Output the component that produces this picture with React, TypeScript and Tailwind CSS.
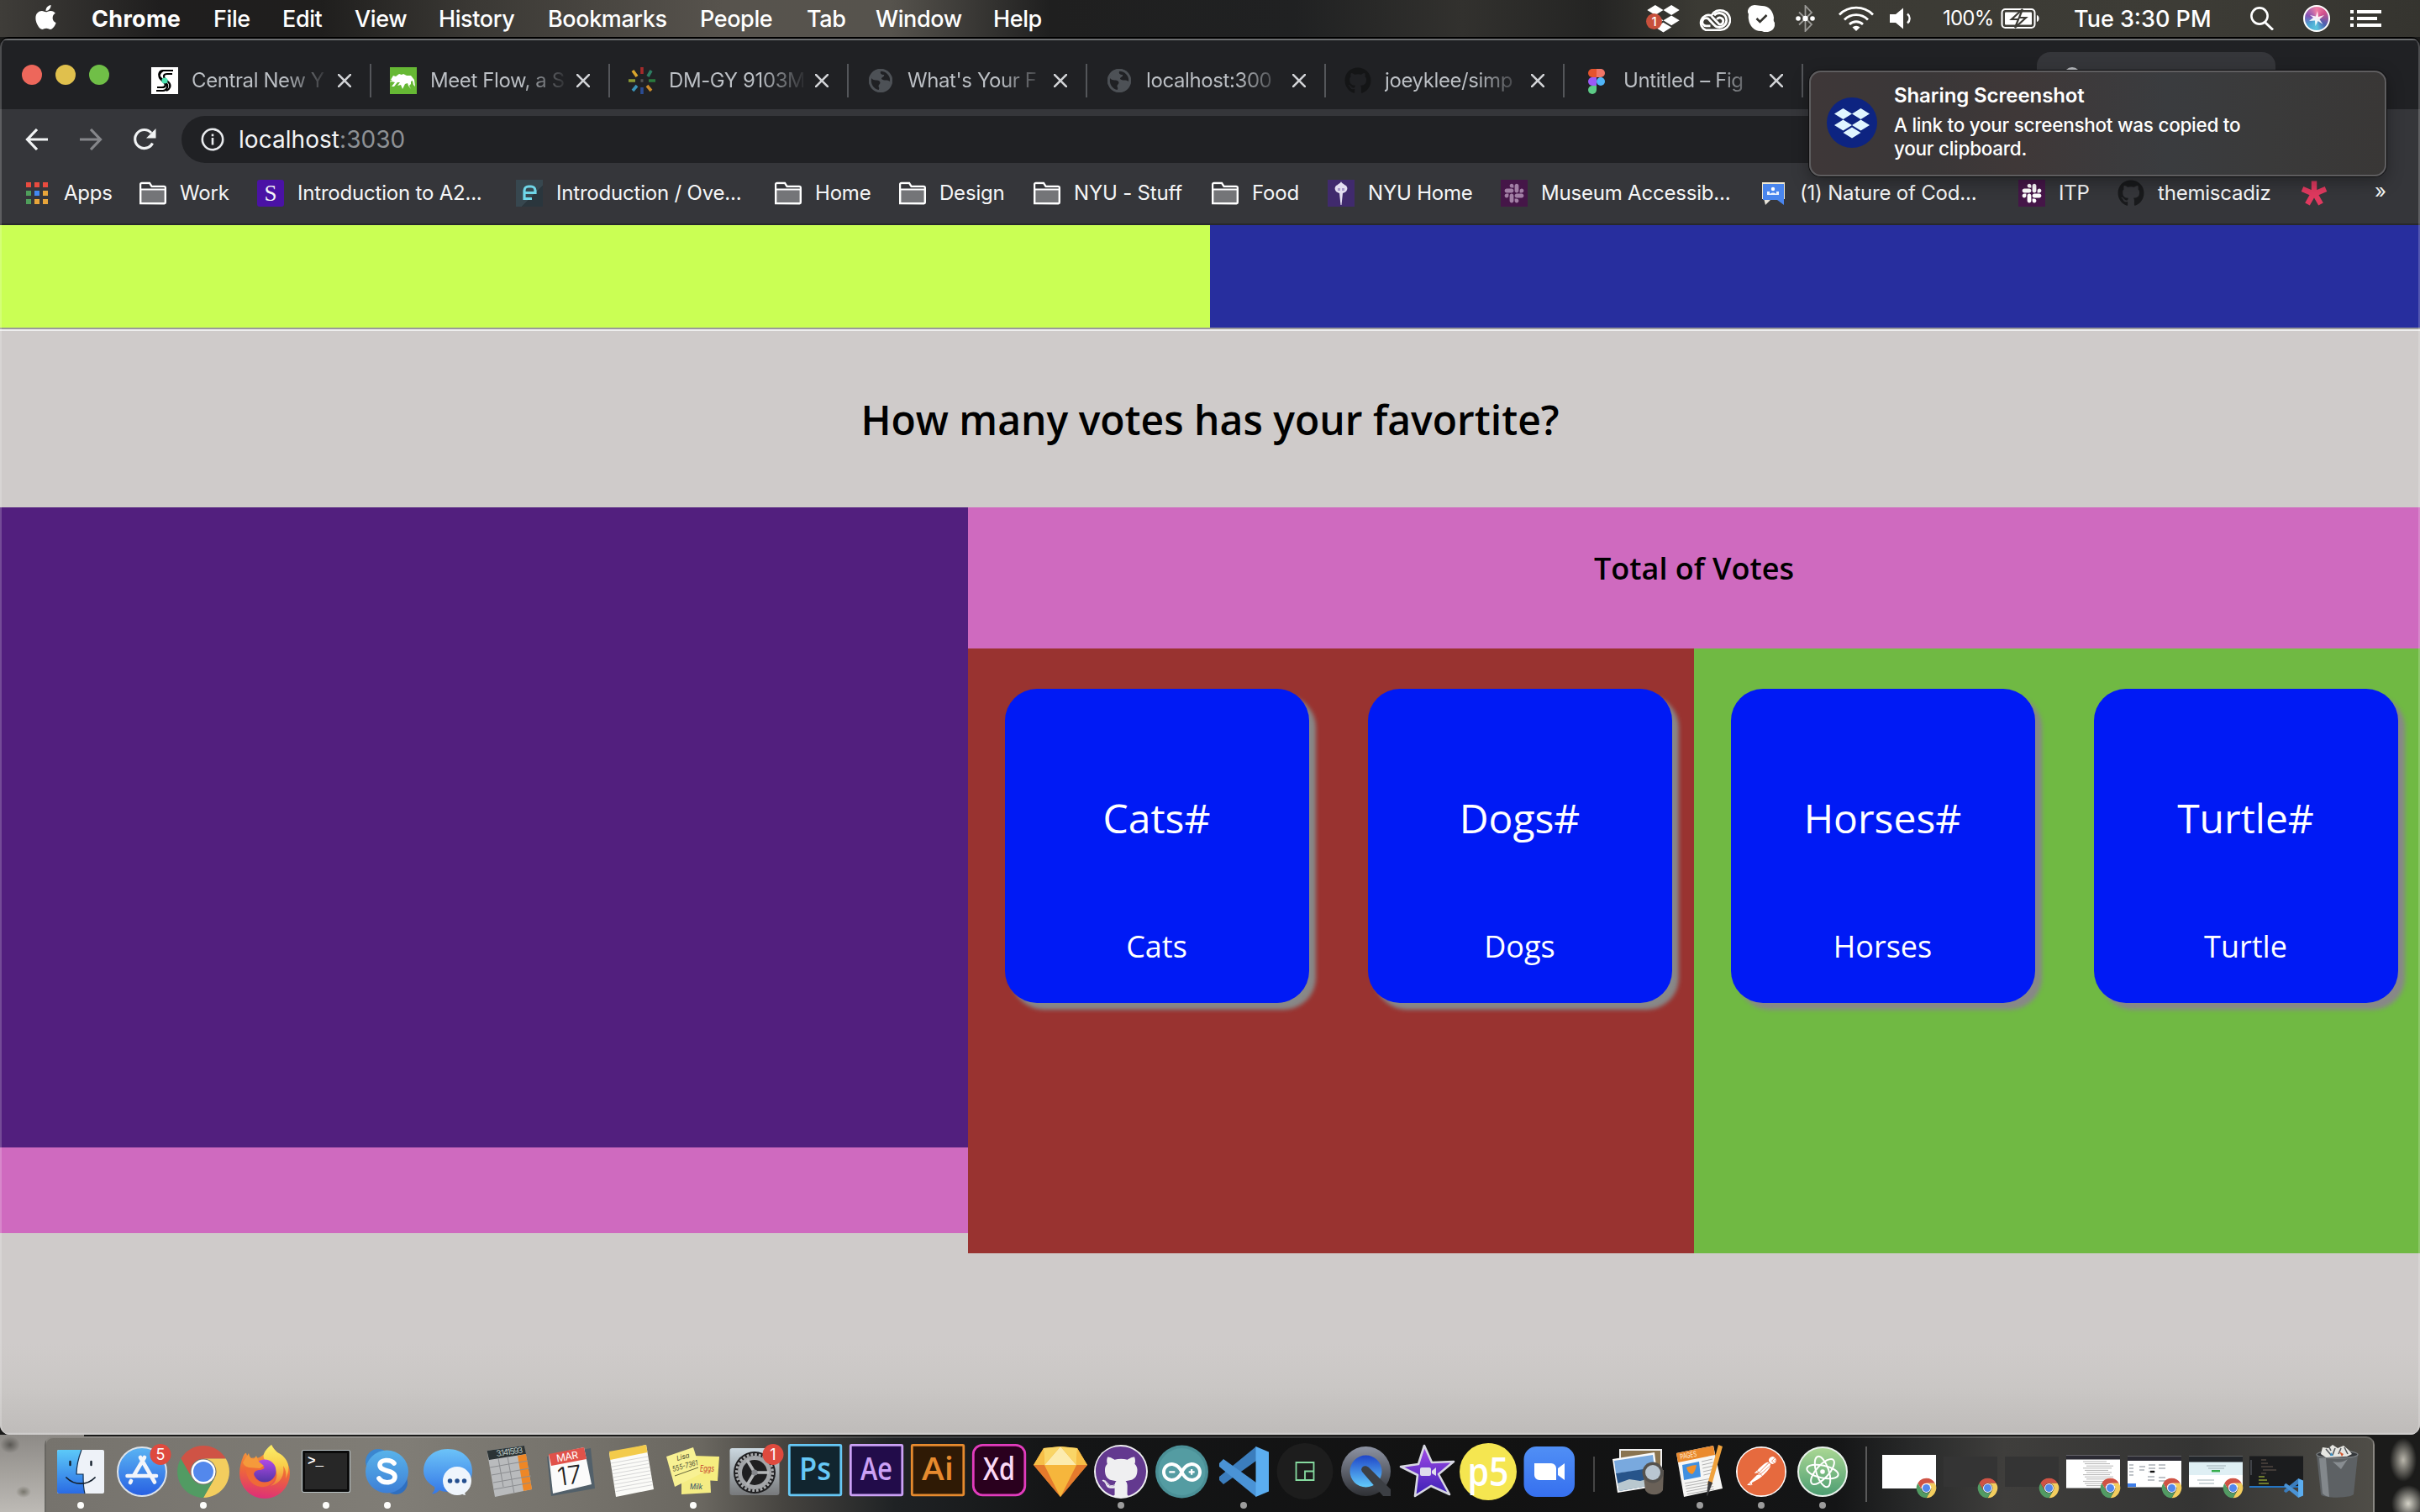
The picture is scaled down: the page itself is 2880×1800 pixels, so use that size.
import type { ReactNode } from 'react';
import { FaApple, FaGithub, FaSlack } from 'react-icons/fa';
import { SiPostman, SiArduino } from 'react-icons/si';

/* ---------- shared marks ---------- */

function DropboxMark({ className }: { className: string }) {
  return (
    <svg viewBox="0 0 42 36" className={className} fill="currentColor">
      <path d="M10.500 0 21 6.500 10.500 13 0 6.500zM31.500 0 42 6.500 31.500 13 21 6.500zM10.500 13.500 21 20l-10.500 6.500L0 20zM31.500 13.500 42 20l-10.500 6.500L21 20zM21 22.500l10.500 6.500L21 35.500 10.500 29z" />
    </svg>
  );
}

function ChromeMark({ className, x, y, size }: { className?: string; x?: number; y?: number; size?: number }) {
  return (
    <svg viewBox="0 0 64 64" className={className} x={x} y={y} width={size} height={size}>
      <path d="M6 17A30 30 0 0 1 58 17L32 17A15 15 0 0 0 19 39.5Z" fill="#cf5345" />
      <path d="M58 17A30 30 0 0 1 32 62L45 39.5A15 15 0 0 0 32 17Z" fill="#f3cd5e" />
      <path d="M32 62A30 30 0 0 1 6 17L19 39.5A15 15 0 0 0 45 39.5Z" fill="#529b63" />
      <circle cx="32" cy="32" r="14" fill="#fff" />
      <circle cx="32" cy="32" r="11.600" fill="#5388ec" />
    </svg>
  );
}

function CodeMark({ x, y, size }: { x: number; y: number; size: number }) {
  return (
    <svg viewBox="0 0 60 60" x={x} y={y} width={size} height={size}>
      <path d="M1 40 6 45 45 17V0L1 36z" fill="#3b7dbd" />
      <path d="M1 20 6 15 45 43V60L1 24z" fill="#4a93d6" />
      <path d="M44.500 0 60 6.500v47L44.500 60z" fill="#5badf0" />
    </svg>
  );
}

function Globe() {
  return (
    <svg viewBox="0 0 32 32" className="size-8">
      <circle cx="16" cy="16" r="14" fill="#4d5156" />
      <path d="M5 13c3 4 8 1 10 4s-3 4-1 7c1 2-1 4-2 4C6 26 3 20 5 13zM17 4c-3 3 0 5 3 5 1 3-3 2-3 5 3 3 7 0 10 3 2-6-2-13-10-13z" fill="#202124" />
      <circle cx="16" cy="16" r="12.600" fill="none" stroke="#4d5156" strokeWidth="2.800" />
    </svg>
  );
}

/* ---------- menu bar ---------- */

const menus: [string, string][] = [
  ['File', 'w-[82px]'],
  ['Edit', 'w-[86px]'],
  ['View', 'w-[100px]'],
  ['History', 'w-[130px]'],
  ['Bookmarks', 'w-[181px]'],
  ['People', 'w-[127px]'],
  ['Tab', 'w-[82px]'],
  ['Window', 'w-[140px]'],
  ['Help', 'w-[80px]'],
];

function MenuBar() {
  return (
    <header className="flex h-11 shrink-0 items-center whitespace-nowrap bg-[linear-gradient(90deg,#3f3d39_0px,#1f1e1e_190px,#1f1e1d_380px,#3a3834_560px,#57534d_860px,#56534d_1060px,#1f1f1f_1250px,#202122_1540px,#32312e_1740px,#242423_1900px,#3b3a34_2020px,#3d3c36_2600px,#35342f_2880px)] text-[27px] leading-11 text-white">
      <div className="flex w-[1960px] shrink-0 items-center pl-[38px]">
        <FaApple className="-mt-1 mr-[38px] h-[33px] w-[33px] shrink-0" />
        <span className="w-[145px] pt-px font-bold tracking-[0.3px]">Chrome</span>
        {menus.map(([label, w]) => (
          <span key={label} className={`${w} shrink-0 pt-px font-medium tracking-[-0.4px]`}>
            {label}
          </span>
        ))}
      </div>
      <div className="relative w-[60px] shrink-0">
        <DropboxMark className="h-[33px] w-[39px]" />
        <span className="absolute bottom-[4px] left-[-1px] size-[19px] rounded-full bg-[#c8503c] text-center text-[15px] font-medium leading-[19px]">1</span>
      </div>
      <div className="w-[60px] shrink-0 pt-1">
        <svg viewBox="0 0 40 28" className="h-7 w-10" fill="none" stroke="#fff">
          <path d="M10 25.800h17.500a11.800 11.800 0 1 0-10.800-17.300A8.800 8.800 0 1 0 10 25.800z" strokeWidth="2.600" />
          <path d="M15.500 20.800H10.500a4.600 4.600 0 1 1 3.400-7.600l5.600 6a8.500 8.500 0 1 0 .5-11" strokeWidth="2.800" />
          <path d="m17 9.500 9.300 9.600a4 4 0 1 0-3-6" strokeWidth="2.800" />
        </svg>
      </div>
      <div className="w-[57px] shrink-0">
        <svg viewBox="0 0 32 32" className="size-8">
          <path d="M8 0a8 8 0 0 0-8 9c2 2 0 4 1 8 1 8 7 14 14 14 3 0 5 2 9 1 6-1 9-6 8-11-2-3-1-4-1-6C30 7 25 1 17 1 13 1 12 0 8 0z" fill="#fff" />
          <path d="m10.500 16 4 4 8-8" fill="none" stroke="#33322e" strokeWidth="2.600" />
        </svg>
      </div>
      <div className="w-[50px] shrink-0">
        <svg viewBox="0 0 24 32" className="h-8 w-6" fill="none" stroke="#9b9a97" strokeWidth="1.800">
          <path d="M4 8.500 19 23l-7.500 8V1L19 9 4 23.500" />
          <circle cx="3" cy="16" r="2.800" fill="#fff" stroke="none" />
          <circle cx="11.500" cy="16" r="3.200" fill="#fff" stroke="none" />
          <circle cx="20" cy="16" r="2.800" fill="#fff" stroke="none" />
        </svg>
      </div>
      <div className="w-[61px] shrink-0">
        <svg viewBox="0 0 44 30" className="h-[30px] w-11" fill="none" stroke="#fff" strokeWidth="2.800">
          <path d="M2 10.500a28.300 28.300 0 0 1 40 0" />
          <path d="M8 16.500a19.500 19.500 0 0 1 28 0" />
          <path d="M14 22a11.500 11.500 0 0 1 16 0" />
          <path d="m22 30-4.500-4.500a6.500 6.500 0 0 1 9 0z" fill="#fff" stroke="none" />
        </svg>
      </div>
      <div className="w-[64px] shrink-0">
        <svg viewBox="0 0 30 26" className="h-[26px] w-[30px]">
          <path d="M1 8h7l9-7.500v25L8 18H1z" fill="#fff" />
          <path d="M22 7.500c3.500 3 3.500 8 0 11" fill="none" stroke="#fff" strokeWidth="2.400" />
        </svg>
      </div>
      <span className="w-[69px] shrink-0 text-[24px] tracking-[-0.8px]">100%</span>
      <div className="w-[87px] shrink-0">
        <svg viewBox="0 0 48 26" className="h-[26px] w-12">
          <rect x="1.500" y="2" width="39" height="22" rx="4" fill="none" stroke="#fff" strokeWidth="2" />
          <rect x="5" y="5.500" width="32" height="15" rx="1" fill="#fff" />
          <path d="M43 9c3.500 1 3.500 7 0 8z" fill="#fff" />
          <path d="M26 2 13 14h8l-4 10 13-12h-8l4-10z" fill="#fff" stroke="#3d3c36" strokeWidth="2.200" />
        </svg>
      </div>
      <span className="w-[209px] shrink-0 pt-px font-medium tracking-[0px]">Tue 3:30 PM</span>
      <div className="w-[64px] shrink-0">
        <svg viewBox="0 0 30 28" className="h-7 w-[30px]" fill="none" stroke="#fff" strokeWidth="2.600">
          <circle cx="12" cy="11" r="9.600" />
          <path d="m18.500 18.500 9.500 9" strokeWidth="3" />
        </svg>
      </div>
      <div className="flex w-[56px] shrink-0">
        <span className="grid size-8 place-items-center rounded-full border-2 border-white bg-[conic-gradient(from_0deg,#ef7fa5,#d24f8c_15%,#4a5fb0_35%,#5cc6dd_50%,#4ba3d2_65%,#8452b4_80%,#ef7fa5)]">
          <svg viewBox="0 0 24 24" className="size-6">
            <path d="m13 3 1 7 7-2-5.500 5 4 6-6-4-3 6-.5-6.500L3 15l5-4-4-3 7 1.500z" fill="#fff" opacity=".9" />
          </svg>
        </span>
      </div>
      <svg viewBox="0 0 38 20" className="h-5 w-[38px] shrink-0" fill="#fff">
        <path d="M0 0h4v4H0zM8 0h29v4H8zM0 8h4v4H0zM8 8h24v4H8zM0 16h4v4H0zM8 16h29v4H8z" />
      </svg>
    </header>
  );
}

/* ---------- tab strip ---------- */

const tabs: { title: string; icon: ReactNode }[] = [
  {
    title: 'Central New Y',
    icon: (
      <svg viewBox="0 0 32 32" className="size-8">
        <path d="M0 0h32v32H0z" fill="#fff" />
        <path d="M26 4H14c-5 0-6 6-3 8.500l7 7c3 3.500 0 8.500-4 8.500H6M25 8h-6c-5 0-5 4-2 6.500l4 4c3 3.500 1 8-3 9.500M7 24h6c4 0 5-3 2-6l-4-4c-3-3-1-8 3-10" fill="none" stroke="#000" strokeWidth="2.200" />
        <circle cx="16" cy="16" r="3.600" fill="#4be3b0" />
      </svg>
    ),
  },
  {
    title: 'Meet Flow, a S',
    icon: (
      <svg viewBox="0 0 32 32" className="size-8">
        <path d="M0 0h32v32H0z" fill="#66b834" />
        <path d="m1 15 3-5 3 1 4-3 3 1 2-1 4 2 5 0 4 5 1 8-2-2-1-5-2 1 0 3-2 2 2 4-3-4-1-3-3 1-3 6-2-5-4 1 3-4-3 0-4 5-3 0 4-5-4-1-3 1 4-3z" fill="#fff" />
      </svg>
    ),
  },
  {
    title: 'DM-GY 9103M',
    icon: (
      <svg viewBox="0 0 32 32" className="size-8" strokeWidth="3.600" fill="none">
        <path d="M16 0v8" stroke="#a52a2a" />
        <path d="m27 4-4 7" stroke="#2e7d63" />
        <path d="M24 16h8" stroke="#2a7a3d" />
        <path d="m22 22 5 6" stroke="#c98a2b" />
        <path d="M16 24v8" stroke="#2b4c93" />
        <path d="m10 22-5 6" stroke="#3a93b8" />
        <path d="M0 16h8" stroke="#8a9a34" />
        <path d="m5 4 5 7" stroke="#d9a52c" />
        <path d="M14.500 16h3" stroke="#555" />
      </svg>
    ),
  },
  { title: "What's Your F", icon: <Globe /> },
  { title: 'localhost:300', icon: <Globe /> },
  { title: 'joeyklee/simp', icon: <FaGithub className="size-8 text-[#141516]" /> },
  {
    title: 'Untitled – Fig',
    icon: (
      <svg viewBox="0 0 32 32" className="size-8">
        <path d="M11 2h5v10h-5a5 5 0 0 1 0-10z" fill="#e5532d" />
        <path d="M16 2h5a5 5 0 0 1 0 10h-5z" fill="#ef7567" />
        <path d="M11 12h5v10h-5a5 5 0 0 1 0-10z" fill="#9b59f6" />
        <circle cx="21" cy="17" r="5" fill="#4fb5f9" />
        <path d="M11 22h5v5a5 5 0 1 1-5-5z" fill="#5ccb86" />
      </svg>
    ),
  },
];

function TabStrip() {
  return (
    <div className="flex h-[82px] items-end bg-[#202124]">
      <div className="flex h-full w-[158px] shrink-0 items-center gap-4 pl-[26px]">
        <span className="size-6 rounded-full bg-[#ed675b]" />
        <span className="size-6 rounded-full bg-[#e0c04d]" />
        <span className="size-6 rounded-full bg-[#70bf47]" />
      </div>
      {tabs.map((t) => (
        <div key={t.title} className="flex h-[68px] w-[284px] shrink-0 items-center pl-[22px]">
          <div className="w-8 shrink-0">{t.icon}</div>
          <span className="ml-4 w-[160px] shrink-0 whitespace-nowrap bg-[linear-gradient(90deg,#bdc1c6_0px,#bdc1c6_110px,rgba(189,193,198,0.1)_160px)] bg-clip-text text-[24px] leading-[40px] tracking-[-0.4px] text-transparent">
            {t.title}
          </span>
          <svg viewBox="0 0 16 16" className="ml-[14px] size-4 shrink-0" stroke="#d0d2d5" strokeWidth="2.600">
            <path d="m0 0 16 16M16 0 0 16" />
          </svg>
          <span className="ml-auto h-10 w-0.5 bg-[#54565a]" />
        </div>
      ))}
      <div className="ml-[278px] h-[68px] w-[284px] rounded-t-[16px] bg-[#35363a] pl-[32px] pt-[18px]">
        <span className="block size-5 rounded-full bg-[#b9bcc0]" />
      </div>
    </div>
  );
}

/* ---------- toolbar ---------- */

function Toolbar() {
  return (
    <div className="flex h-[72px] items-center bg-[#35363a] pl-[30px]">
      <svg viewBox="0 0 28 26" className="h-[26px] w-7 shrink-0" fill="none" stroke="#f1f3f4" strokeWidth="3.200">
        <path d="M27 13H3M14 1 2.500 13 14 25" />
      </svg>
      <svg viewBox="0 0 28 26" className="ml-9 h-[26px] w-7 shrink-0" fill="none" stroke="#85868a" strokeWidth="3.200">
        <path d="M1 13h24M14 1l11.500 12L14 25" />
      </svg>
      <svg viewBox="0 0 28 28" className="ml-9 size-7 shrink-0">
        <path d="M23.500 18.500A11 11 0 1 1 22 6.300" fill="none" stroke="#f1f3f4" strokeWidth="3.200" />
        <path d="M27.500 1v11.500H16z" fill="#f1f3f4" />
      </svg>
      <div className="ml-[30px] flex h-14 w-[2300px] items-center rounded-full bg-[#202124] pl-[23px] text-[28px] text-[#f3f4f5]">
        <svg viewBox="0 0 28 28" className="size-7 shrink-0">
          <circle cx="14" cy="14" r="12.200" fill="none" stroke="#e8eaed" strokeWidth="2.600" />
          <path d="M12.700 12h2.600v8.500h-2.600zM12.700 7.500h2.600v2.700h-2.600z" fill="#e8eaed" />
        </svg>
        <span className="ml-[17px] tracking-[0.050px]">
          localhost<span className="text-[#8e9195]">:3030</span>
        </span>
      </div>
    </div>
  );
}

/* ---------- bookmarks ---------- */

function Folder() {
  return (
    <svg viewBox="0 0 32 32" className="size-8">
      <path d="M1.200 28V5.500A1.500 1.500 0 0 1 2.700 4H12l2.500 4H29a1.800 1.800 0 0 1 1.800 1.800V27a1.200 1.200 0 0 1-1.200 1.200z" fill="#747578" stroke="#fff" strokeWidth="2.400" />
      <path d="M2.400 5.200h9l2.500 4h15.700v2H2.400z" fill="#35363a" />
      <path d="M1 11.500h30" stroke="#fff" strokeWidth="2" />
    </svg>
  );
}

function Tile({ className, children }: { className: string; children: ReactNode }) {
  return <span className={`grid size-8 place-items-center ${className}`}>{children}</span>;
}

const bookmarks: { label: string; w: string; icon: ReactNode }[] = [
  {
    label: 'Apps',
    w: 'w-[138px]',
    icon: (
      <svg viewBox="0 0 32 32" className="size-8">
        <path d="M3 3h6v6H3zM13 3h6v6h-6zM23 3h6v6h-6z" fill="#e84b3f" />
        <path d="M3 13h6v6H3zM3 23h6v6H3z" fill="#4f9e5b" />
        <path d="M13 13h6v6h-6z" fill="#4389f0" />
        <path d="M23 13h6v6h-6zM13 23h6v6h-6zM23 23h6v6h-6z" fill="#e8a53a" />
      </svg>
    ),
  },
  { label: 'Work', w: 'w-[140px]', icon: <Folder /> },
  {
    label: 'Introduction to A2...',
    w: 'w-[308px]',
    icon: <Tile className="rounded-[3px] bg-[#4a12a5] font-['Liberation_Serif'] text-[27px] leading-8">S</Tile>,
  },
  {
    label: 'Introduction / Ove...',
    w: 'w-[308px]',
    icon: (
      <Tile className="bg-[linear-gradient(135deg,#37474f_60%,#2a363d_60%)] text-[#6fd6e8]">
        <svg viewBox="0 0 32 32" className="size-8" fill="none" stroke="currentColor" strokeWidth="3.200">
          <path d="M10 15.500h13V13a5 5 0 0 0-5-5h-3a5 5 0 0 0-5 5v9.500h9" />
        </svg>
      </Tile>
    ),
  },
  { label: 'Home', w: 'w-[148px]', icon: <Folder /> },
  { label: 'Design', w: 'w-[160px]', icon: <Folder /> },
  { label: 'NYU - Stuff', w: 'w-[212px]', icon: <Folder /> },
  { label: 'Food', w: 'w-[138px]', icon: <Folder /> },
  {
    label: 'NYU Home',
    w: 'w-[206px]',
    icon: (
      <Tile className="bg-[#402a6d]">
        <svg viewBox="0 0 32 32" className="size-8">
          <path d="M16 2c1 3 3 2 4 4 3 1 4 4 3 6-1 3-3 3-5 4l-1.500 14h-1L14 16c-2-1-4-1-5-4-1-2 0-5 3-6 1-2 3-1 4-4z" fill="#e3def0" />
          <path d="M12 10h3v3h-3zM17 10h3v3h-3z" fill="#a89bc9" />
        </svg>
      </Tile>
    ),
  },
  {
    label: 'Museum Accessib...',
    w: 'w-[308px]',
    icon: <Tile className="bg-[#451648] text-[#a27fa5]"><FaSlack className="size-[26px]" /></Tile>,
  },
  {
    label: '(1) Nature of Cod...',
    w: 'w-[308px]',
    icon: (
      <svg viewBox="0 0 32 32" className="size-8">
        <path d="M3 3h27v20H3z" fill="#f1e9d2" />
        <path d="M5 22h10L7 30z" fill="#e8e4da" />
        <path d="M4 5h25v25l-8-6H4z" fill="#4a86ee" />
        <circle cx="16" cy="11" r="2.200" fill="#fff" />
        <path d="M9 18v-4h3v3c2-2 6-2 8 0v-3h3v4z" fill="#fff" opacity=".9" />
      </svg>
    ),
  },
  {
    label: 'ITP',
    w: 'w-[118px]',
    icon: <Tile className="bg-[#451648] text-white"><FaSlack className="size-[26px]" /></Tile>,
  },
  { label: 'themiscadiz', w: 'w-[218px]', icon: <FaGithub className="size-8 text-[#191a1c]" /> },
  {
    label: '',
    w: 'w-[88px]',
    icon: (
      <svg viewBox="0 0 32 32" className="size-8" stroke="#e0395f" strokeWidth="6.500">
        <path d="M16 17V1.500M16 17 2 11M16 17l14-6M16 15 8 29M16 15l8 14" />
      </svg>
    ),
  },
];

function Bookmarks() {
  return (
    <nav className="flex h-16 items-center whitespace-nowrap bg-[#35363a] pb-[8px] pl-7 pt-0 text-[24px] leading-8 text-[#f5f6f7]">
      {bookmarks.map((b, i) => (
        <div key={i} className={`flex shrink-0 items-center ${b.w}`}>
          <div className="w-8 shrink-0">{b.icon}</div>
          <span className="ml-[16px] tracking-[-0.2px]">{b.label}</span>
        </div>
      ))}
      <span className="-mt-1">»</span>
    </nav>
  );
}

/* ---------- page ---------- */

function VoteCard({ name }: { name: string }) {
  return (
    <div className="ml-11 mt-12 h-[374px] w-[362px] rounded-[38px] bg-[#001af5] pt-[122px] text-center text-white shadow-[8px_8px_5px_#888888]">
      <p className="-ml-px text-[48px] leading-[64px]">{name}#</p>
      <p className="-ml-px mt-[97px] text-[36px] leading-[48px]">{name}</p>
    </div>
  );
}

function Page() {
  return (
    <main className="flex flex-1 flex-col bg-[#cfcbca] bg-[linear-gradient(180deg,transparent_92.5%,#cac7c5_96%,#bfbcba_99.800%,#cfcdcc_99.900%)] font-['Open_Sans',sans-serif]">
      <div className="grid h-[122px] shrink-0 grid-cols-2">
        <div className="bg-[#caff54]" />
        <div className="bg-[#272e9e]" />
      </div>
      <div className="h-1 shrink-0 border-b-2 border-t-2 border-b-[#eeeeee] border-t-[#9a9a9a]" />
      <h2 className="h-[210px] shrink-0 pt-px text-center text-[48px] font-semibold leading-[210px] text-black">How many votes has your favortite?</h2>
      <div className="flex items-start">
        <div className="w-[1152px]">
          <div className="h-[762px] bg-[#521f7e]" />
          <div className="h-[102px] bg-[#cf6abf]" />
        </div>
        <div className="w-[1728px]">
          <h3 className="h-[168px] bg-[#cf6abf] text-center text-[36px] font-semibold leading-[146px] text-black">Total of Votes</h3>
          <div className="grid h-[720px] grid-cols-2">
            <div className="grid grid-cols-2 bg-[#993330]">
              <VoteCard name="Cats" />
              <VoteCard name="Dogs" />
            </div>
            <div className="grid grid-cols-2 bg-[#70b943]">
              <VoteCard name="Horses" />
              <VoteCard name="Turtle" />
            </div>
          </div>
        </div>
      </div>
    </main>
  );
}

function Notification() {
  return (
    <aside className="absolute left-[2153px] top-[84px] flex h-[126px] w-[687px] rounded-[14px] border-2 border-[#5e5d5f] bg-[linear-gradient(90deg,#3e3738_0%,#3a3738_20%,#3f3838_36%,#3a3c3f_62%,#3a3a3a_80%,#393736_100%)] pl-[19px] shadow-[0_0_0_1px_#0f0f10,0_6px_20px_rgba(0,0,0,0.35)]">
      <span className="mt-[30px] grid size-[60px] shrink-0 place-items-center rounded-full bg-[#0d2481] text-[#e0f6ff]">
        <DropboxMark className="mt-px h-[36px] w-[42px]" />
      </span>
      <div className="ml-[20px] whitespace-nowrap text-[24px] leading-7 text-white">
        <p className="mt-[14px] font-semibold tracking-[-0.1px]">Sharing Screenshot</p>
        <p className="mt-[7px] text-[22.500px] font-medium tracking-[-0.270px]">A link to your screenshot was copied to</p>
        <p className="text-[22.500px] font-medium tracking-[-0.270px]">your clipboard.</p>
      </div>
    </aside>
  );
}

/* ---------- dock ---------- */

function Badge({ n, x }: { n: string; x: number }) {
  return (
    <g>
      <circle cx={x} cy="15.500" r="12.500" fill="#de4a3e" />
      <text x={x} y="22" textAnchor="middle" fontSize="18" fill="#fff">{n}</text>
    </g>
  );
}

function Adobe({ t, bg, fg, r }: { t: string; bg: string; fg: string; r: number }) {
  return (
    <g>
      <rect x="5.300" y="4.300" width="61.500" height="59.500" rx={r} fill={bg} stroke={fg} strokeWidth="2.800" />
      <text x="36" y="46" textAnchor="middle" fontFamily="Open Sans" fontWeight="600" fontSize="38" textLength="38" lengthAdjust="spacingAndGlyphs" fill={t === 'Xd' ? '#fbd9f6' : fg}>{t}</text>
    </g>
  );
}

function Thumb({ children, code }: { children: ReactNode; code?: boolean }) {
  return (
    <g>
      {children}
      {code ? <CodeMark x={45} y={44} size={23} /> : <ChromeMark x={44} y={43} size={25} />}
    </g>
  );
}

const lines = [0, 1, 2, 3, 4, 5, 6, 7, 8, 9, 10, 11];

const apps: { id: string; dot?: boolean; art: ReactNode }[] = [
  {
    id: 'finder',
    dot: true,
    art: (
      <g>
        <rect x="8" y="10" width="56" height="52" rx="2" fill="#eef2f8" />
        <path d="M10 10h27c-3 8-6 18-6 29h8c0 8 0 16 2 23H10a2 2 0 0 1-2-2V12a2 2 0 0 1 2-2z" fill="url(#gFinder)" />
        <path d="M37 10c-3 8-6 18-6 29h8c0 8 0 16 2 23" fill="none" stroke="#14304f" strokeWidth="1.200" />
        <path d="M19 43c9 9.500 25 9.500 34 0" fill="none" stroke="#14202d" strokeWidth="1.800" strokeLinecap="round" />
        <path d="M23.500 24v4M48.500 24v4" stroke="#14202d" strokeWidth="2.400" strokeLinecap="round" />
      </g>
    ),
  },
  {
    id: 'appstore',
    art: (
      <g>
        <circle cx="36" cy="36" r="29" fill="url(#gStore)" stroke="#dde3ea" strokeWidth="2" />
        <path d="M39 19 26 41M34 19l17 29.500M18.500 41h34.500M23 47l-1 2" stroke="#f2f5fa" strokeWidth="4.600" strokeLinecap="round" />
        <Badge n="5" x={58} />
      </g>
    ),
  },
  { id: 'chrome', dot: true, art: <ChromeMark x={3} y={3} size={66} /> },
  {
    id: 'firefox',
    art: (
      <g>
        <path d="M10 19c1-3 3-6 4-5 1 3 2 5 5 6 4-1 8 0 11-1 3-2 10-7 14-15 3 5 5 7 7 9 9 6 15 14 15 25a30 30 0 0 1-60 0c0-7 2-14 4-19z" fill="url(#gFox)" />
        <path d="M44 4c-9 7-12 14-7 19 8 4 15 12 13 20-1 5-4 8-7 10 12-3 17-13 15-24 3 4 4 9 3 15 7-12 3-25-10-31-3-3-5-5-7-9z" fill="url(#gFlame)" />
        <circle cx="36" cy="35" r="13.500" fill="url(#gFoxIn)" />
        <path d="M14 31c6-4 14-4 21-1 2 2-2 4-6 4-6 1-7 5-5 9 5 8 18 7 24 1-3 9-13 12-21 9C18 50 13 40 14 31z" fill="#ef6a37" />
        <path d="M17 14c1 4 2 6 6 7l3-4 3 7 6 5-5 3-13-1c-4-1-6-3-7-6z" fill="#f59a3b" />
      </g>
    ),
  },
  {
    id: 'terminal',
    dot: true,
    art: (
      <g>
        <rect x="7.500" y="10.500" width="57" height="50" rx="2" fill="#0a0a0a" stroke="#b9c2c4" strokeWidth="1.200" />
        <rect x="11" y="14" width="50" height="43" fill="#272727" />
        <text x="14" y="28" fontFamily="Liberation Mono" fontWeight="700" fontSize="16" fill="#fff">&gt;_</text>
      </g>
    ),
  },
  {
    id: 'skype',
    dot: true,
    art: (
      <g>
        <circle cx="25" cy="24" r="15" fill="#3b86cf" />
        <circle cx="46" cy="49" r="14" fill="#2f6fc0" />
        <circle cx="35.500" cy="36" r="25.500" fill="url(#gSkype)" />
        <path d="M44 26c-4-5-17-5-17 2 0 9 18 5 18 14 0 8-14 9-19 2" fill="none" stroke="#fff" strokeWidth="5.600" strokeLinecap="round" />
      </g>
    ),
  },
  {
    id: 'messages',
    art: (
      <g>
        <path d="M36 9c17 0 29 11 29 26S53 60 36 60c-4 0-8-1-10-2-3 3-6 5-9 4 3-3 4-6 3-8C12 50 7 43 7 35 7 20 19 9 36 9z" fill="url(#gMsg)" />
        <circle cx="47" cy="47" r="17" fill="#eff5fc" />
        <path d="M52 61c1 2 3 3 5 3-1-2-1-4 0-6z" fill="#eff5fc" />
        <path d="M38.500 47h.1M47 47h.1M55.500 47h.1" stroke="#244f8f" strokeWidth="5.400" strokeLinecap="round" />
      </g>
    ),
  },
  {
    id: 'calculator',
    art: (
      <g>
        <path d="M9.500 11 54 5l9 52-44 9z" fill="#b9bbbd" />
        <path d="M9.500 11 54 5l2 10L12 22z" fill="#2b3335" />
        <path d="m46 17 10-2 7 42-10 2z" fill="#ee8726" />
        <path d="m13 31 45-8M15 40l45-8M17 49l45-8M18 57l44-8M23 20l6 34M34 18l8 44" stroke="#8b8d90" strokeWidth="1" />
        <text x="21" y="18" fontSize="10" fill="#b8c4c0" transform="rotate(-8 21 18)" textLength="32">3.141593</text>
      </g>
    ),
  },
  {
    id: 'calendar',
    art: (
      <g>
        <path d="m8 18 5 47 52-9-5-48z" fill="#52606a" />
        <path d="m10 16 42-9 9 44-46 11z" fill="#fbfbfb" />
        <path d="m10 15 42-8 3 14-42 8z" fill="#e1524a" />
        <text x="20" y="24.500" fontSize="12" fill="#fff" transform="rotate(-10 20 24)" textLength="26">MAR</text>
        <text x="22" y="53" fontSize="30" fontWeight="300" fill="#222" transform="rotate(-8 22 53)" textLength="29">17</text>
      </g>
    ),
  },
  {
    id: 'notes',
    art: (
      <g>
        <path d="M9 14 53 4l9 53-45 9z" fill="#fbfbf8" />
        <path d="M9 12 53 4l1.500 9L10 22z" fill="#f3cb4b" />
        <g stroke="#d6d6d6" strokeWidth="1">
          {lines.slice(0, 9).map((i) => <path key={i} d={`M${11 + i * 0.7} ${26 + i * 4.2}l44-8`} />)}
        </g>
      </g>
    ),
  },
  {
    id: 'stickies',
    dot: true,
    art: (
      <g>
        <path d="M22 40h34l1 21-35 2z" fill="#f4ec84" />
        <path d="m36 17 31 1-2 29-35-2z" fill="#f6ee7f" />
        <path d="m4 18 32-11 10 31-32 16z" fill="#f8f193" />
        <g fontStyle="italic" fontSize="10">
          <text x="17" y="23" fontSize="8" fill="#4a4a30" transform="rotate(-15 17 23)">Lisa</text>
          <text x="12" y="36" fontSize="9" fill="#4a4a30" transform="rotate(-15 12 36)" textLength="31" lengthAdjust="spacingAndGlyphs">555-7361</text>
          <text x="44" y="36" fill="#c4402b" textLength="17" lengthAdjust="spacingAndGlyphs">Eggs</text>
          <text x="32" y="57" fontSize="9" fill="#2b4b6b" textLength="15" lengthAdjust="spacingAndGlyphs">Milk</text>
        </g>
        <path d="m14 41 28-10" stroke="#66663c" strokeWidth="1" />
      </g>
    ),
  },
  {
    id: 'preferences',
    art: (
      <g>
        <rect x="6.500" y="8" width="59" height="56" rx="3" fill="url(#gPref)" />
        <circle cx="36" cy="37" r="25" fill="#1f1f21" />
        <circle cx="36" cy="37" r="21.500" fill="none" stroke="#a9abad" strokeWidth="3" strokeDasharray="2.800 2" />
        <circle cx="36" cy="37" r="17.500" fill="none" stroke="#a3a5a8" strokeWidth="5" />
        <path d="M36 37h17M36 37l-9 15M36 37l-9-15" stroke="#b4b6b8" strokeWidth="3.600" />
        <circle cx="36" cy="37" r="3.600" fill="#83858a" />
        <Badge n="1" x={58} />
      </g>
    ),
  },
  { id: 'ps', art: <Adobe t="Ps" bg="#11252f" fg="#66c8f6" r={1} /> },
  { id: 'ae', art: <Adobe t="Ae" bg="#220c4a" fg="#cba1f6" r={1} /> },
  { id: 'ai', art: <Adobe t="Ai" bg="#2f1a05" fg="#e68a2e" r={1} /> },
  { id: 'xd', art: <Adobe t="Xd" bg="#2a001e" fg="#e23cbd" r={11} /> },
  {
    id: 'sketch',
    art: (
      <g>
        <path d="M16 8 36 6l20 2 12 20-32 38L4 28z" fill="#f2a935" />
        <path d="M4 28h13l19 38zM68 28H55L36 66z" fill="#e47a2c" />
        <path d="M17 28h38L36 66z" fill="#f6b63c" />
        <path d="M36 6 17 28h38z" fill="#fcebae" />
        <path d="m16 8 20-2-19 22z" fill="#f9d566" />
        <path d="m56 8-20-2 19 22z" fill="#f9d566" />
        <path d="M16 8 4 28h13z" fill="#f6be47" />
        <path d="m56 8 12 20H55z" fill="#f6be47" />
      </g>
    ),
  },
  {
    id: 'github',
    dot: true,
    art: (
      <g>
        <circle cx="36" cy="36" r="32" fill="#efeff1" />
        <FaGithub x={5} y={5} size={62} color="#63398f" />
      </g>
    ),
  },
  {
    id: 'arduino',
    art: (
      <g>
        <circle cx="35.500" cy="36" r="31.500" fill="#4b9097" />
        <circle cx="35.500" cy="36" r="28" fill="#549ca2" />
        <SiArduino x={12} y={13} size={47} color="#fff" />
      </g>
    ),
  },
  { id: 'vscode', dot: true, art: <CodeMark x={6} y={6} size={60} /> },
  {
    id: 'editor',
    art: (
      <g>
        <circle cx="36" cy="35.500" r="33.500" fill="#1d1d1d" />
        <path d="M25.500 25h21v21h-21zM36 46V35.500h10.500" fill="none" stroke="#86dba0" strokeWidth="1.800" />
      </g>
    ),
  },
  {
    id: 'quicktime',
    art: (
      <g>
        <circle cx="35.500" cy="35.500" r="29.500" fill="url(#gQt)" />
        <circle cx="35.500" cy="35.500" r="19" fill="url(#gQtIn)" />
        <path d="M31 36c-3-5 3-9 8-5l26 26v8h-9z" fill="#3c3f44" />
      </g>
    ),
  },
  {
    id: 'imovie',
    art: (
      <g>
        <path d="m32 5 9 20 26-1-18 15 13 24-22-10-19 12 3-25L4 30l21-3z" fill="url(#gStar)" stroke="#d7d7e2" strokeWidth="2.600" strokeLinejoin="round" />
        <rect x="27" y="31" width="13" height="10" rx="2" fill="#dedcec" />
        <path d="m41 35 5-4v10l-5-3z" fill="#dedcec" />
      </g>
    ),
  },
  {
    id: 'p5',
    art: (
      <g>
        <circle cx="36" cy="36" r="34" fill="#f5e650" />
        <text x="36" y="53" textAnchor="middle" fontFamily="Open Sans" fontWeight="600" fontSize="47" fill="#fff" textLength="49" lengthAdjust="spacingAndGlyphs">p5</text>
      </g>
    ),
  },
  {
    id: 'zoom',
    art: (
      <g>
        <rect x="5.500" y="6" width="60.500" height="60" rx="15" fill="url(#gZoom)" />
        <path d="M18 26h20a6 6 0 0 1 6 6v14H24a6 6 0 0 1-6-6zM46 32l8-6v20l-8-6z" fill="#fff" />
      </g>
    ),
  },
];

const docs: { id: string; dot?: boolean; art: ReactNode }[] = [
  {
    id: 'preview',
    art: (
      <g>
        <path d="M13 9h51v41H13z" fill="#efefef" />
        <path d="M15 11h47v37H15z" fill="#8a7450" />
        <path d="m5 21 50-8 5 40-49 8z" fill="#fafafa" />
        <path d="m7 23 46-7 2 16-46 6z" fill="#79a9de" />
        <path d="m9 38 46-7 3 20-45 8z" fill="#27548a" />
        <path d="m11 50 14-5 13 2 20-5 1 9-46 8z" fill="#b9c8cf" />
        <path d="M41 34h25l-1 24c-4 7-17 7-21 0z" fill="#6a6158" />
        <circle cx="53" cy="37" r="12.500" fill="#55524e" />
        <circle cx="53" cy="37" r="9" fill="#b9c6d2" />
      </g>
    ),
  },
  {
    id: 'pages',
    dot: true,
    art: (
      <g>
        <path d="m8 14 44-9 11 51-46 10z" fill="#f6f6f4" />
        <path d="m8 14 44-9 2 11-44 9z" fill="#ea8a2d" />
        <path d="m15 28 20-4 2 18-20 4z" fill="#3f8fe0" />
        <path d="M20 31c4-2 9-3 12-3-1 5-2 8-5 11-4-1-6-4-7-8z" fill="#f29028" />
        <g stroke="#b0b0b0" strokeWidth="1">
          {lines.slice(0, 5).map((i) => <path key={i} d={`M${18 + i * 0.7} ${50 + i * 3.2}l32-6`} />)}
          {lines.slice(0, 5).map((i) => <path key={`r${i}`} d={`M${38 + i * 0.6} ${24 + i * 4}l13-3`} />)}
        </g>
        <text x="13" y="21.500" fontSize="9" fill="#ffe9d0" transform="rotate(-11 13 21)" textLength="20" lengthAdjust="spacingAndGlyphs">PAGES</text>
        <path d="m58 4 5 2-13 46-5-1z" fill="#f0a23c" />
        <path d="m46 47 5 2-6 16-1-1z" fill="#3b3b3d" />
      </g>
    ),
  },
  {
    id: 'postman',
    dot: true,
    art: (
      <g>
        <circle cx="36" cy="36" r="30" fill="#fff" />
        <SiPostman x={7.500} y={7.500} size={57} color="#e66a3e" />
      </g>
    ),
  },
  {
    id: 'atom',
    dot: true,
    art: (
      <g>
        <circle cx="36" cy="36" r="29" fill="url(#gAtom)" stroke="#e9f2ec" strokeWidth="2" />
        <g fill="none" stroke="#fff" strokeWidth="2">
          <ellipse cx="36" cy="36" rx="19" ry="7.500" transform="rotate(12 36 36)" />
          <ellipse cx="36" cy="36" rx="19" ry="7.500" transform="rotate(72 36 36)" />
          <ellipse cx="36" cy="36" rx="19" ry="7.500" transform="rotate(132 36 36)" />
        </g>
        <circle cx="36" cy="36" r="2.800" fill="#fff" />
      </g>
    ),
  },
];

const windows: { id: string; art: ReactNode }[] = [
  { id: 'w1', art: <Thumb><rect x="4" y="16" width="64" height="40" fill="#fff" /></Thumb> },
  { id: 'w2', art: <Thumb><rect x="4" y="18" width="64" height="36" fill="#343434" /></Thumb> },
  { id: 'w3', art: <Thumb><rect x="4" y="18" width="64" height="36" fill="#343434" /></Thumb> },
  {
    id: 'w4',
    art: (
      <Thumb>
        <rect x="4" y="16.500" width="64" height="39" fill="#fff" />
        <rect x="4" y="16.500" width="64" height="5" fill="#2b2a33" />
        <g stroke="#b5b5b5" strokeWidth="1">
          {lines.map((i) => <path key={i} d={`M${24 + (i % 3) * 2} ${24 + i * 2.6}h${28 + (i % 4) * 2}`} />)}
        </g>
      </Thumb>
    ),
  },
  {
    id: 'w5',
    art: (
      <Thumb>
        <rect x="4" y="17.500" width="64" height="37" fill="#fff" />
        <rect x="4" y="17.500" width="64" height="5.500" fill="#2b2a33" />
        <rect x="4" y="50" width="10" height="4" fill="#3d7de8" />
        <path d="M6 28h5M6 32h5M6 36h5M6 40h5M18 30h7M18 34h6M29 28h8M29 32h8M41 28h8M41 32h8M28 42h8M28 46h8M41 43h8M41 47h8M29 36h8" stroke="#aab0b6" strokeWidth="1.400" />
        <path d="M31 36h5" stroke="#111" strokeWidth="2.400" />
      </Thumb>
    ),
  },
  {
    id: 'w6',
    art: (
      <Thumb>
        <rect x="4" y="17.500" width="64" height="37" fill="#fff" />
        <rect x="4" y="24" width="64" height="16" fill="#dfeff4" />
        <rect x="4" y="17.500" width="64" height="7" fill="#22262b" />
        <path d="M25 29h23M27 32h19M14 46h20M16 50h18" stroke="#9fb0b5" strokeWidth="1.200" />
        <rect x="31" y="34" width="10" height="2.400" fill="#35ad4c" />
      </Thumb>
    ),
  },
  {
    id: 'w7',
    art: (
      <Thumb code>
        <rect x="4" y="17.500" width="64" height="37" fill="#1b1c1e" />
        <rect x="4" y="53" width="64" height="2" fill="#2474c2" />
        <path d="M18 22h6M18 26h8M18 30h14M20 34h16M18 38h6" stroke="#6a5b50" strokeWidth="1.200" />
        <path d="M15 42h7M15 46h10M15 50h12" stroke="#8a9a34" strokeWidth="1.400" />
        <path d="M6 22v18" stroke="#4a4d52" strokeWidth="1.600" />
      </Thumb>
    ),
  },
];

function Slot({ art, dot, dim }: { art: ReactNode; dot?: boolean; dim?: boolean }) {
  return (
    <div className="flex w-[72.830px] shrink-0 flex-col items-center pt-[4px]">
      <svg viewBox="0 0 72 72" className="size-[72px]" fontFamily="Inter">{art}</svg>
      {dot && <span className={`size-2 rounded-full ${dim ? 'bg-[#9c9c9c]' : 'bg-[#fdfdfb]'}`} />}
    </div>
  );
}

function Defs() {
  return (
    <svg className="absolute size-0">
      <defs>
        <linearGradient id="gFinder" x1="0" y1="0" x2="0" y2="1"><stop stopColor="#5cc9f8" /><stop offset="1" stopColor="#2a6be4" /></linearGradient>
        <linearGradient id="gStore" x1="0" y1="0" x2="0" y2="1"><stop stopColor="#5ab4f3" /><stop offset="1" stopColor="#275fe2" /></linearGradient>
        <linearGradient id="gFox" x1="0.6" y1="0" x2="0.45" y2="1"><stop stopColor="#f6b03f" /><stop offset=".5" stopColor="#ef6a37" /><stop offset="1" stopColor="#dd2f78" /></linearGradient>
        <linearGradient id="gFlame" x1="0.5" y1="0" x2="0.5" y2="1"><stop stopColor="#fbf06a" /><stop offset=".5" stopColor="#f9cf4a" /><stop offset="1" stopColor="#f07a38" /></linearGradient>
        <linearGradient id="gFoxIn" x1="0.5" y1="0" x2="0.5" y2="1"><stop stopColor="#b24ae6" /><stop offset="1" stopColor="#5336a6" /></linearGradient>
        <linearGradient id="gSkype" x1="0" y1="0" x2="0" y2="1"><stop stopColor="#59b3ea" /><stop offset="1" stopColor="#3d7fd6" /></linearGradient>
        <linearGradient id="gMsg" x1="0" y1="0" x2="0" y2="1"><stop stopColor="#6cc3f8" /><stop offset="1" stopColor="#3578e6" /></linearGradient>
        <linearGradient id="gPref" x1="0" y1="0" x2="0" y2="1"><stop stopColor="#cbd8e0" /><stop offset="1" stopColor="#77797b" /></linearGradient>
        <linearGradient id="gQt" x1="0" y1="0" x2="0" y2="1"><stop stopColor="#8d93a3" /><stop offset="1" stopColor="#2e3034" /></linearGradient>
        <linearGradient id="gQtIn" x1="0" y1="0" x2="0" y2="1"><stop stopColor="#1f45c8" /><stop offset="1" stopColor="#62ccfb" /></linearGradient>
        <linearGradient id="gStar" x1="0" y1="0" x2="0" y2="1"><stop stopColor="#a44be8" /><stop offset="1" stopColor="#3a20b4" /></linearGradient>
        <linearGradient id="gZoom" x1="0" y1="0" x2="0" y2="1"><stop stopColor="#508ff5" /><stop offset="1" stopColor="#3670ef" /></linearGradient>
        <linearGradient id="gAtom" x1="0" y1="0" x2="0" y2="1"><stop stopColor="#abd894" /><stop offset="1" stopColor="#4c9d72" /></linearGradient>
      </defs>
    </svg>
  );
}

function Dock() {
  return (
    <footer className="flex h-[92px] shrink-0 bg-[radial-gradient(ellipse_16px_26px_at_2860px_30px,#b9b6ab,transparent),radial-gradient(ellipse_20px_22px_at_2866px_82px,#d5d3c8,transparent),radial-gradient(ellipse_12px_10px_at_12px_12px,#5a5854,transparent),radial-gradient(ellipse_9px_7px_at_28px_68px,#77756c,transparent),linear-gradient(180deg,#8d8a86_0px,#bdbab5_92px)] bg-[length:2880px_92px,2880px_92px,2880px_92px,2880px_92px,100px_92px] bg-no-repeat pl-[53px]">
      <Defs />
      <div className="mt-0.5 flex h-[96px] w-[2773px] shrink-0 rounded-t-[10px] border-2 border-b-0 border-white/15 bg-[linear-gradient(90deg,#76736d_0px,#807d76_420px,#75726b_640px,#6a6760_780px,#45433f_880px,#1f2224_1010px,#141516_1200px,#121212_1700px,#141516_2130px,#2a2b2b_2230px,#3f3e3c_2330px,#343433_2560px,#4f4d47_2770px)] pl-[5px]">
        {apps.map((a, i) => (
          <Slot key={a.id} art={a.art} dot={a.dot} dim={i > 12} />
        ))}
        <div className="flex w-[33px] shrink-0 justify-center pt-[22px]">
          <span className="h-[42px] w-0.5 bg-[#454545]" />
        </div>
        {docs.map((a) => (
          <Slot key={a.id} art={a.art} dot={a.dot} dim />
        ))}
        <div className="flex w-[31px] shrink-0 justify-center pt-[10px]">
          <span className="h-[66px] w-0.5 bg-[#5a5a5a]" />
        </div>
        {windows.map((a) => (
          <Slot key={a.id} art={a.art} />
        ))}
        <Slot
          art={
            <g>
              <path d="m11 16 5 47c3 5 35 5 39 0l5-47z" fill="#5d6164" />
              <path d="m14 20 4 42c2 2 4 3 8 4L22 20z" fill="#83888c" />
              <path d="M30 24c8 2 14 0 18-3l-8 12z" fill="#888d91" />
              <ellipse cx="35.500" cy="15.500" rx="24.500" ry="4.500" fill="#34373a" stroke="#7c8083" strokeWidth="1.400" />
              <path d="m16 15 2-8 7 1 5-4 6 4 7-3 6 5 4 5-6 3-25 1z" fill="#e6e6e2" />
              <path d="m22 9 6 7M33 8l-3 8M44 7l4 8M26 7l2 4M40 8l-3 7" stroke="#55595c" strokeWidth="1.600" />
              <path d="m38 12 5 3-2 3z" fill="#d4572f" />
              <path d="m28 13 3 4h-4z" fill="#3c92c8" />
            </g>
          }
        />
      </div>
    </footer>
  );
}

export default function App() {
  return (
    <div className="relative flex h-[1800px] w-[2880px] flex-col overflow-hidden bg-[#1b1b1a] font-['Inter',sans-serif]">
      <MenuBar />
      <div className="relative flex h-[1664px] shrink-0 flex-col overflow-hidden rounded-b-[12px] rounded-t-[10px] border-t-2 border-black">
        <div className="h-0.5 shrink-0 bg-[#6b6d6f]" />
        <TabStrip />
        <Toolbar />
        <Bookmarks />
        <div className="h-0.5 shrink-0 bg-[#27282b]" />
        <Page />
        <div className="pointer-events-none absolute inset-0 rounded-b-[12px] rounded-t-[10px] border-x-2 border-white/20" />
      </div>
      <Dock />
      <Notification />
    </div>
  );
}
